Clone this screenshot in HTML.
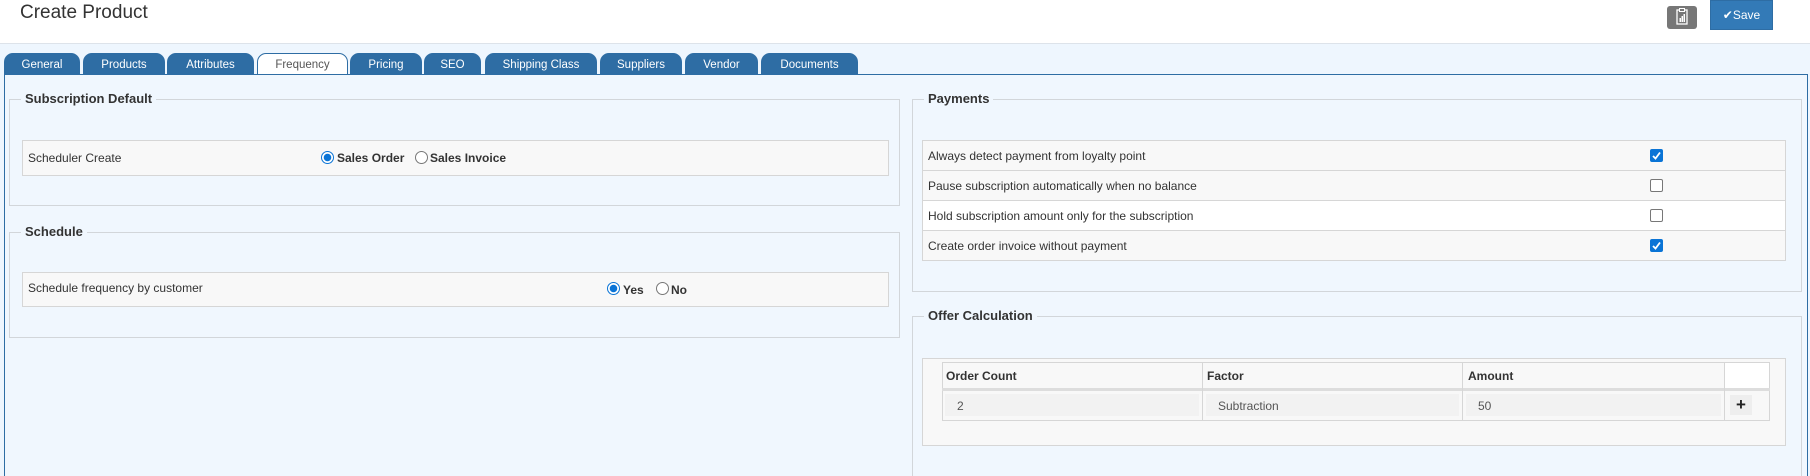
<!DOCTYPE html>
<html><head><meta charset="utf-8"><style>
*{box-sizing:border-box;margin:0;padding:0}
html,body{width:1810px;height:476px;overflow:hidden}
body{background:#fff;font-family:"Liberation Sans",sans-serif;color:#333;position:relative;font-size:12px}
.a{position:absolute}
.title{left:20px;top:2px;font-size:19px;color:#333}
.hdr{left:0;top:43px;width:1810px;height:433px;background:#eef6fe;border-top:1px solid #dde3ea}
.tab{position:absolute;top:53px;height:22px;background:#2e6da4;color:#fff;border-radius:9px 9px 0 0;text-align:center;font-size:11.5px;line-height:22px;border:1px solid #2e6da4}
.tab.act{background:#fff;color:#555;border-color:#2e6da4}
.panel{left:4px;top:74px;width:1804px;height:402px;border:1px solid #2e6da4;border-bottom:none;background:#f0f7fe}
.fs{position:absolute;border:1px solid #d2d6da}
.lg{position:absolute;top:-9px;left:11px;background:#f0f7fe;padding:0 4px;font-weight:bold;font-size:13px;color:#333}
.row{position:absolute;border:1px solid #d6d6d6;background:#f8f8f8;font-size:12px}
.rad{position:absolute;width:13px;height:13px;border-radius:50%;border:1px solid #777;background:#fff}
.rad.on{border:1px solid #0a74d6;background:radial-gradient(circle,#0a74d6 0 3.5px,#fff 4px)}
.cb{position:absolute;width:13px;height:13px;border-radius:2px;border:1px solid #777;background:#fff}
.cb.on{border-color:#0a74d6;background:#0a74d6}
.b{font-weight:bold;position:absolute;font-size:12px}
</style></head><body>
<div class="a title">Create Product</div>
<div class="a" style="left:1667px;top:6px;width:30px;height:23px;background:#777;border-radius:3px">
<svg width="30" height="23" viewBox="0 0 30 23"><rect x="10" y="4" width="10" height="14" fill="none" stroke="#fff" stroke-width="1.3"/><rect x="12.5" y="2.5" width="5" height="3" fill="#777" stroke="#fff" stroke-width="1"/><rect x="12.5" y="12" width="1.5" height="4" fill="#fff"/><rect x="14.5" y="10" width="1.5" height="6" fill="#fff"/><rect x="16.5" y="8" width="1.5" height="8" fill="#fff"/></svg></div>
<div class="a" style="left:1710px;top:0;width:63px;height:30px;background:#337ab7;border:1px solid #2e6da4;color:#fff;font-size:12px;line-height:28px;text-align:center">✔Save</div>
<div class="a hdr"></div>
<div class="a panel"></div>
<div class="tab" style="left:4px;width:76px">General</div>
<div class="tab" style="left:83px;width:82px">Products</div>
<div class="tab" style="left:167px;width:87px">Attributes</div>
<div class="tab act" style="left:257px;width:91px">Frequency</div>
<div class="tab" style="left:350px;width:72px">Pricing</div>
<div class="tab" style="left:424px;width:57px">SEO</div>
<div class="tab" style="left:485px;width:112px">Shipping Class</div>
<div class="tab" style="left:600px;width:82px">Suppliers</div>
<div class="tab" style="left:685px;width:73px">Vendor</div>
<div class="tab" style="left:761px;width:97px">Documents</div>

<div class="fs" style="left:9px;top:99px;width:891px;height:107px"><div class="lg">Subscription Default</div></div>
<div class="row" style="left:22px;top:140px;width:867px;height:36px"><span class="a" style="left:5px;top:10px">Scheduler Create</span></div>
<div class="rad on" style="left:321px;top:151px"></div><span class="b" style="left:337px;top:151px">Sales Order</span>
<div class="rad" style="left:415px;top:151px"></div><span class="b" style="left:430px;top:151px">Sales Invoice</span>

<div class="fs" style="left:9px;top:232px;width:891px;height:106px"><div class="lg">Schedule</div></div>
<div class="row" style="left:22px;top:272px;width:867px;height:35px"><span class="a" style="left:5px;top:8px">Schedule frequency by customer</span></div>
<div class="rad on" style="left:607px;top:282px"></div><span class="b" style="left:623px;top:283px">Yes</span>
<div class="rad" style="left:656px;top:282px"></div><span class="b" style="left:671px;top:283px">No</span>

<div class="fs" style="left:912px;top:99px;width:890px;height:193px"><div class="lg">Payments</div></div>
<div class="row" style="left:922px;top:140px;width:864px;height:31px"><span class="a" style="left:5px;top:8px">Always detect payment from loyalty point</span></div>
<div class="row" style="left:922px;top:170px;width:864px;height:31px"><span class="a" style="left:5px;top:8px">Pause subscription automatically when no balance</span></div>
<div class="row" style="left:922px;top:200px;width:864px;height:31px;background:#fff"><span class="a" style="left:5px;top:8px">Hold subscription amount only for the subscription</span></div>
<div class="row" style="left:922px;top:230px;width:864px;height:31px"><span class="a" style="left:5px;top:8px">Create order invoice without payment</span></div>
<div class="cb on" style="left:1650px;top:149px"><svg width="11" height="11" viewBox="0 0 11 11"><path d="M2 6l2.5 2.5L9 2.5" fill="none" stroke="#fff" stroke-width="1.8"/></svg></div>
<div class="cb" style="left:1650px;top:179px"></div>
<div class="cb" style="left:1650px;top:209px"></div>
<div class="cb on" style="left:1650px;top:239px"><svg width="11" height="11" viewBox="0 0 11 11"><path d="M2 6l2.5 2.5L9 2.5" fill="none" stroke="#fff" stroke-width="1.8"/></svg></div>

<div class="fs" style="left:912px;top:316px;width:890px;height:170px"><div class="lg">Offer Calculation</div></div>
<div class="a" style="left:922px;top:358px;width:864px;height:88px;border:1px solid #d6d6d6;background:#f8f8f8"></div>
<div class="a" style="left:942px;top:362px;width:828px;height:59px;border:1px solid #d6d6d6;background:#f8f8f8"></div>
<div class="a" style="left:942px;top:388px;width:828px;height:3px;background:#ddd"></div>
<div class="a" style="left:1202px;top:362px;width:1px;height:59px;background:#d6d6d6"></div>
<div class="a" style="left:1462px;top:362px;width:1px;height:59px;background:#d6d6d6"></div>
<div class="a" style="left:1724px;top:362px;width:1px;height:59px;background:#d6d6d6"></div>
<div class="a" style="left:1725px;top:363px;width:44px;height:25px;background:#fff"></div>
<span class="b" style="left:946px;top:369px">Order Count</span>
<span class="b" style="left:1207px;top:369px">Factor</span>
<span class="b" style="left:1468px;top:369px">Amount</span>
<div class="a" style="left:945px;top:394px;width:254px;height:22px;background:#f2f2f2;color:#555;padding:5px 0 0 12px">2</div>
<div class="a" style="left:1206px;top:394px;width:253px;height:22px;background:#f2f2f2;color:#555;padding:5px 0 0 12px">Subtraction</div>
<div class="a" style="left:1466px;top:394px;width:255px;height:22px;background:#f2f2f2;color:#555;padding:5px 0 0 12px">50</div>
<div class="a" style="left:1730px;top:395px;width:22px;height:20px;background:#eee;font-weight:bold;font-size:17px;line-height:19px;text-align:center;color:#222">+</div>
</body></html>
